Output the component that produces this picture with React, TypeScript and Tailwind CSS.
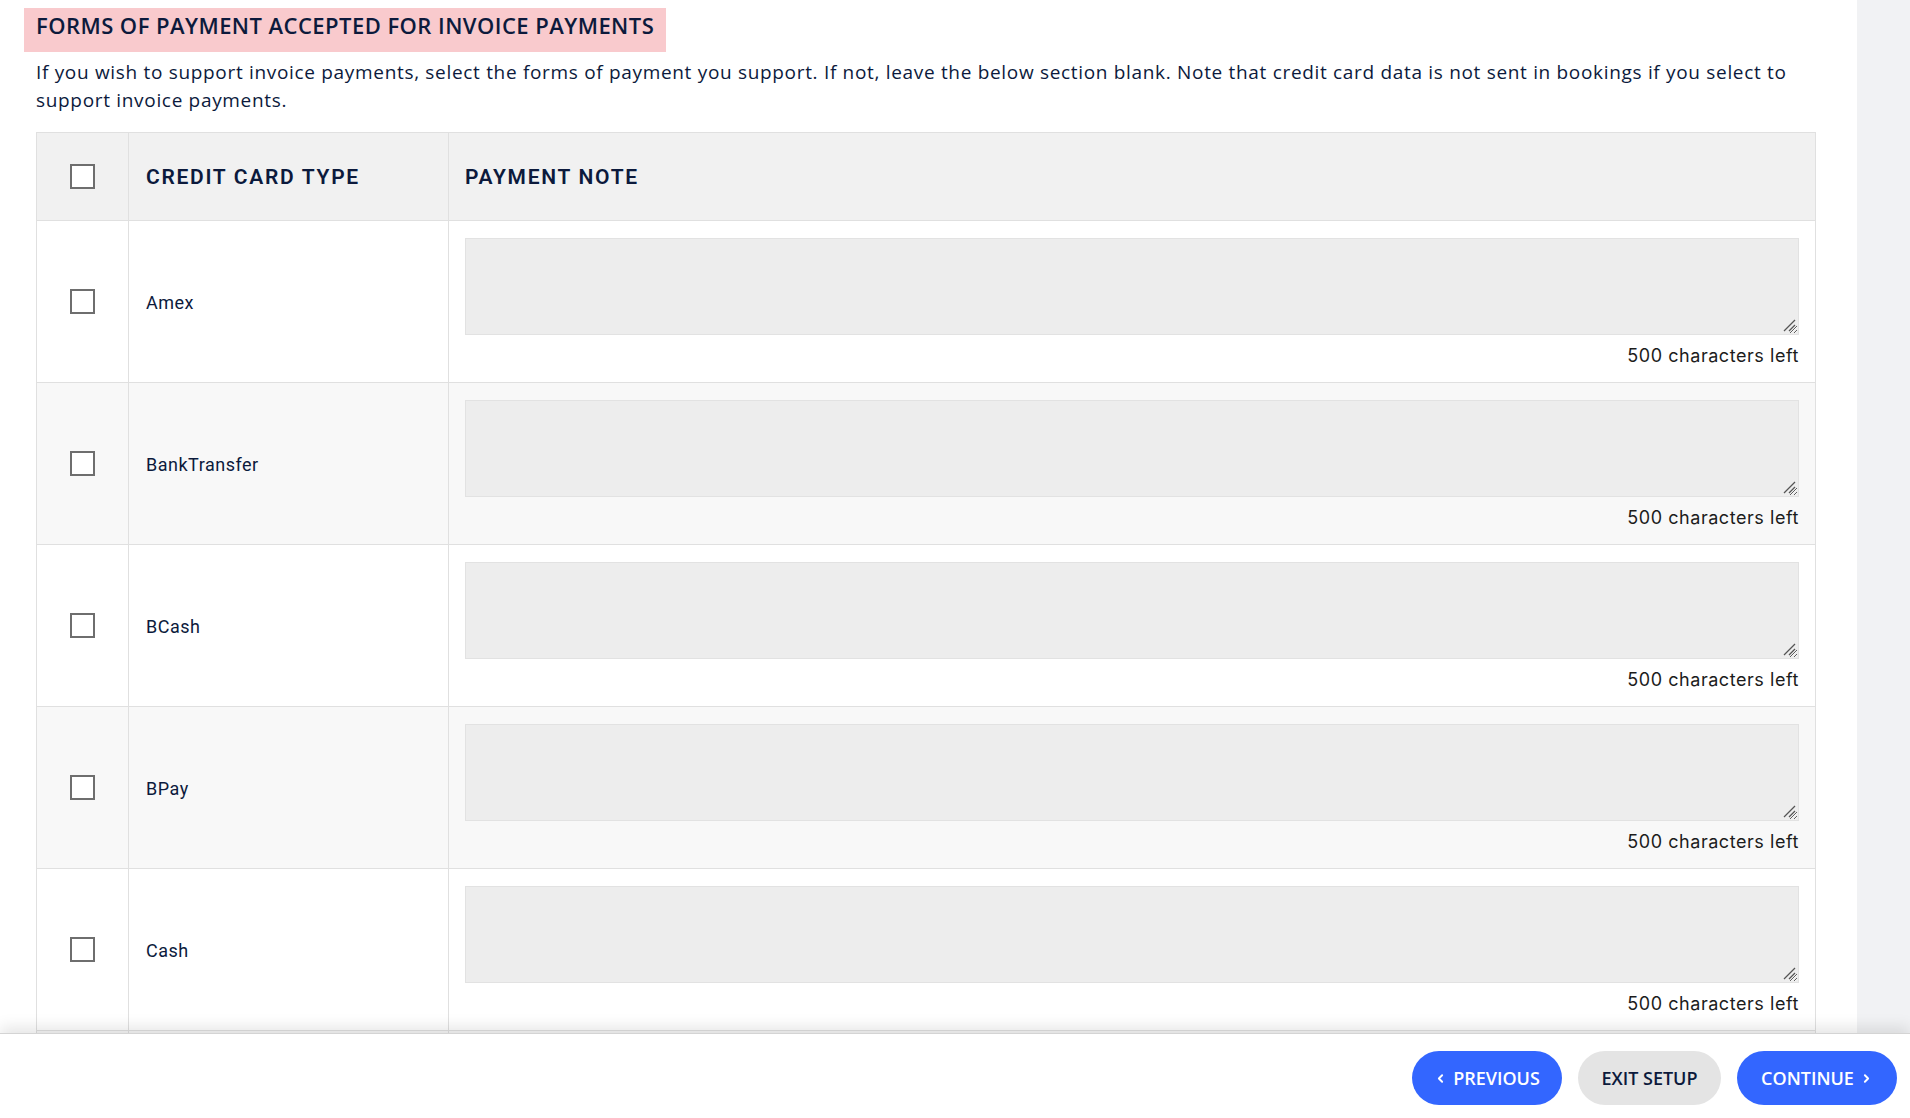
import React, { useState } from 'react';
import { ChevronLeft, ChevronRight } from 'lucide-react';

interface PaymentRow {
  id: string;
  name: string;
}

const PAYMENT_TYPES: PaymentRow[] = [
  { id: 'amex', name: 'Amex' },
  { id: 'bank', name: 'BankTransfer' },
  { id: 'bcash', name: 'BCash' },
  { id: 'bpay', name: 'BPay' },
  { id: 'cash', name: 'Cash' },
  { id: 'check', name: 'Check' },
  { id: 'diners', name: 'DinersClub' },
];

const MAX_CHARS = 500;

function Box({ checked, onClick }: { checked: boolean; onClick: () => void }) {
  return (
    <button
      onClick={onClick}
      className="w-[25px] h-[25px] border-2 border-[#6e6e6e] bg-white flex items-center justify-center"
    >
      {checked && <span className="w-[13px] h-[13px] bg-[#3366ff]" />}
    </button>
  );
}

export default function App() {
  const [selected, setSelected] = useState<Record<string, boolean>>({});
  const [notes, setNotes] = useState<Record<string, string>>({});

  const allChecked = PAYMENT_TYPES.every(p => selected[p.id]);

  const toggleAll = () => {
    const next: Record<string, boolean> = {};
    PAYMENT_TYPES.forEach(p => (next[p.id] = !allChecked));
    setSelected(next);
  };

  return (
    <div className="h-[1118px] flex flex-col overflow-hidden bg-white">
      <div className="flex-1 min-h-0 flex overflow-hidden">
        <div className="flex-1 min-w-0 pl-[24px] pr-[41px] pt-[8px]">
          <div className="inline-block bg-[#f9cacd] px-[12px] h-[44px] leading-[35px] text-[22px] font-semibold text-[#0c1a3c] font-['Open_Sans',sans-serif] tracking-[0.45px]">
            FORMS OF PAYMENT ACCEPTED FOR INVOICE PAYMENTS
          </div>
          <p className="pl-[12px] -mr-[24px] mt-[6px] text-[19px] leading-[28px] text-[#0c1a3c] font-['Open_Sans',sans-serif] tracking-[0.68px]">
            If you wish to support invoice payments, select the forms of payment you support. If not, leave the below section blank. Note that credit card data is not sent in bookings if you select to support invoice payments.
          </p>

          <div className="ml-[12px] mt-[18px] border border-[#e0e0e0] font-['Roboto',sans-serif]">
            <div className="grid grid-cols-[92px_320px_1fr] h-[88px] bg-[#f1f1f1] border-b border-[#e0e0e0]">
              <div className="border-r border-[#e0e0e0] flex items-center justify-center">
                <Box checked={allChecked} onClick={toggleAll} />
              </div>
              <div className="border-r border-[#e0e0e0] flex items-center pt-[2px] pl-[17px] text-[21px] font-semibold text-[#0c1a3c] tracking-[1.7px]">
                CREDIT CARD TYPE
              </div>
              <div className="flex items-center pt-[2px] pl-[16px] text-[21px] font-semibold text-[#0c1a3c] tracking-[1.7px]">
                PAYMENT NOTE
              </div>
            </div>

            {PAYMENT_TYPES.map((row, i) => {
              const note = notes[row.id] || '';
              return (
                <div
                  key={row.id}
                  className={`grid grid-cols-[92px_320px_1fr] border-b border-[#e0e0e0] ${i % 2 === 1 ? 'bg-[#f8f8f8]' : 'bg-white'}`}
                >
                  <div className="border-r border-[#e0e0e0] flex items-center justify-center">
                    <Box
                      checked={!!selected[row.id]}
                      onClick={() => setSelected({ ...selected, [row.id]: !selected[row.id] })}
                    />
                  </div>
                  <div className="border-r border-[#e0e0e0] flex items-center pt-[1px] pl-[17px] text-[18px] text-[#0c1a3c] tracking-[0.5px]">
                    {row.name}
                  </div>
                  <div className="pl-[16px] pr-[16px] pt-[17px] pb-[13px] flex flex-col">
                    <div className="relative">
                      <textarea
                        value={note}
                        maxLength={MAX_CHARS}
                        onChange={e => setNotes({ ...notes, [row.id]: e.target.value })}
                        className="block w-full h-[97px] bg-[#ededed] border border-[#e2e2e2] focus:outline-none p-2 text-[16px]"
                      />
                      <svg
                        className="absolute right-[3px] bottom-[3px] pointer-events-none"
                        width="14"
                        height="14"
                        viewBox="0 0 14 14"
                      >
                        <path d="M13 2 L2 13" stroke="#555" strokeWidth="1.3" />
                        <path d="M13 7 L7 13" stroke="#555" strokeWidth="1.3" />
                      </svg>
                    </div>
                    <div className="mt-[8px] leading-[26px] text-right text-[18px] text-[#1c1c1c] font-['Inter',sans-serif] tracking-[0.55px]">
                      {MAX_CHARS - note.length} characters left
                    </div>
                  </div>
                </div>
              );
            })}
          </div>
        </div>
        <div className="w-[53px] shrink-0 bg-[#f1f2f4]" />
      </div>

      <div className="relative z-10 h-[85px] shrink-0 bg-white shadow-[0_-6px_14px_rgba(0,0,0,0.10)] border-t border-[#d4d4d4] flex items-start justify-end gap-[16px] pr-[13px] pt-[17px] font-['Open_Sans',sans-serif]">
        <button className="h-[54px] w-[150px] rounded-full bg-[#3366ff] text-white text-[18px] font-semibold flex items-center justify-center gap-[6px]">
          <ChevronLeft className="w-[13px] h-[13px]" strokeWidth={3.5} />
          PREVIOUS
        </button>
        <button className="h-[54px] w-[143px] rounded-full bg-[#e4e4e4] text-[#0c1a3c] text-[18px] font-semibold">
          EXIT SETUP
        </button>
        <button className="h-[54px] w-[160px] rounded-full bg-[#3366ff] text-white text-[18px] font-semibold flex items-center justify-center gap-[6px]">
          CONTINUE
          <ChevronRight className="w-[13px] h-[13px]" strokeWidth={3.5} />
        </button>
      </div>
    </div>
  );
}
